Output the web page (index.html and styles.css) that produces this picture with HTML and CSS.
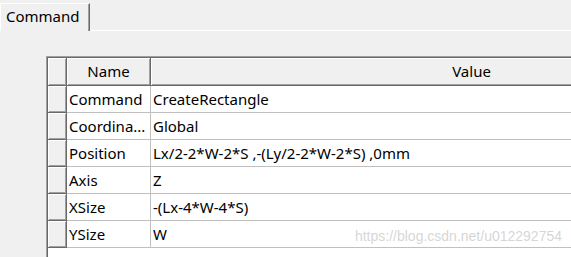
FILE: index.html
```html
<!DOCTYPE html>
<html>
<head>
<meta charset="utf-8">
<link rel="stylesheet" href="styles.css">
</head>
<body>
<div class="tabbar">
  <div class="tab">Command</div>
  <div class="tabrest"></div>
</div>
<div class="panel">
  <div class="frame">
    <div class="grid">
      <div class="row head">
        <div class="rh raised"></div>
        <div class="hname raised">Name</div>
        <div class="hvalue raised">Value</div>
      </div>
      <div class="row">
        <div class="rh raised"></div>
        <div class="name">Command</div>
        <div class="value">CreateRectangle</div>
      </div>
      <div class="row">
        <div class="rh raised"></div>
        <div class="name">Coordina...</div>
        <div class="value">Global</div>
      </div>
      <div class="row">
        <div class="rh raised"></div>
        <div class="name">Position</div>
        <div class="value">Lx/2-2*W-2*S ,-(Ly/2-2*W-2*S) ,0mm</div>
      </div>
      <div class="row">
        <div class="rh raised"></div>
        <div class="name">Axis</div>
        <div class="value">Z</div>
      </div>
      <div class="row">
        <div class="rh raised"></div>
        <div class="name">XSize</div>
        <div class="value">-(Lx-4*W-4*S)</div>
      </div>
      <div class="row">
        <div class="rh raised"></div>
        <div class="name">YSize</div>
        <div class="value">W</div>
      </div>
    </div>
  </div>
</div>
<div class="watermark">https://blog.csdn.net/u012292754</div>
</body>
</html>
```
FILE: styles.css
```css
html, body {
  margin: 0;
  padding: 0;
}
body {
  position: relative;
  width: 571px;
  height: 257px;
  overflow: hidden;
  background: #f0f0f0;
  font-family: "Noto Sans", "Open Sans", sans-serif;
  font-size: 15px;
  color: #000;
}
.tabbar {
  display: flex;
  align-items: flex-end;
  padding-top: 3px;
  height: 28px;
}
.tab {
  box-sizing: border-box;
  width: 90px;
  height: 28px;
  border-top: 1px solid #fff;
  border-left: 1px solid #fff;
  border-right: 1px solid #696969;
  box-shadow: inset -1px 0 #a0a0a0;
  padding-left: 5px;
  line-height: 25px;
}
.tabrest {
  flex: 1;
  height: 1px;
  background: #fff;
}
.panel {
  box-sizing: border-box;
  padding-top: 25px;
  padding-left: 46px;
  width: 571px;
  height: 226px;
  overflow: hidden;
}
.frame {
  border-top: 1px solid #a0a0a0;
  border-left: 1px solid #a0a0a0;
}
.grid {
  border-top: 1px solid #696969;
  border-left: 1px solid #696969;
  background: #fff;
  width: 745px;
  height: 199px;
}
.row {
  display: flex;
  height: 27px;
}
.row.head {
  height: 28px;
}
.raised {
  box-sizing: border-box;
  background: #f0f0f0;
  border-right: 1px solid #696969;
  border-bottom: 1px solid #696969;
  box-shadow: inset 1px 1px #fff, inset -1px -1px #a0a0a0;
}
.rh {
  width: 19px;
  flex: none;
}
.hname, .hvalue {
  flex: none;
  text-align: center;
  line-height: 26px;
}
.hname {
  width: 84px;
}
.hvalue {
  width: 642px;
}
.name, .value {
  box-sizing: border-box;
  flex: none;
  border-bottom: 1px solid #c0c0c0;
  line-height: 26px;
  padding-left: 2px;
  white-space: nowrap;
  overflow: hidden;
}
.name {
  width: 84px;
  border-right: 1px solid #c0c0c0;
}
.value {
  width: 642px;
}
.watermark {
  position: absolute;
  right: 9px;
  top: 228px;
  font-family: "Liberation Sans", Arial, sans-serif;
  font-size: 14px;
  color: rgba(200, 200, 200, 0.75);
  white-space: nowrap;
}
```
